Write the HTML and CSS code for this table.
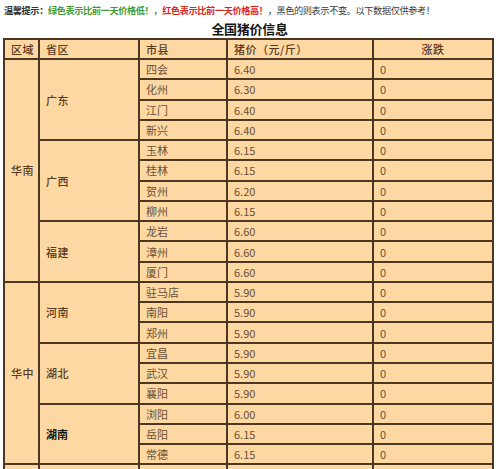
FILE: index.html
```html
<!DOCTYPE html>
<html lang="zh">
<head>
<meta charset="utf-8">
<title>全国猪价信息</title>
<link rel="stylesheet" href="styles.css">
</head>
<body>
<p class="note"><span class="lead">温馨提示：</span><span class="green">绿色表示比前一天价格低！</span>，<span class="red">红色表示比前一天价格高！</span>，黑色的则表示不变。以下数据仅供参考！</p>
<h1 class="title">全国猪价信息</h1>
<table class="prices">
<colgroup>
<col class="c-area"><col class="c-prov"><col class="c-city"><col class="c-price"><col class="c-chg">
</colgroup>
<thead>
<tr><th class="hd">区域</th><th class="hd">省区</th><th class="hd">市县</th><th class="hd">猪价（元/斤）</th><th class="hd center">涨跌</th></tr>
</thead>
<tbody>
<tr><td class="area" rowspan="11">华南</td><td class="prov" rowspan="4">广东</td><td>四会</td><td>6.40</td><td>0</td></tr>
<tr><td>化州</td><td>6.30</td><td>0</td></tr>
<tr><td>江门</td><td>6.40</td><td>0</td></tr>
<tr><td>新兴</td><td>6.40</td><td>0</td></tr>
<tr><td class="prov" rowspan="4">广西</td><td>玉林</td><td>6.15</td><td>0</td></tr>
<tr><td>桂林</td><td>6.15</td><td>0</td></tr>
<tr><td>贺州</td><td>6.20</td><td>0</td></tr>
<tr><td>柳州</td><td>6.15</td><td>0</td></tr>
<tr><td class="prov" rowspan="3">福建</td><td>龙岩</td><td>6.60</td><td>0</td></tr>
<tr><td>漳州</td><td>6.60</td><td>0</td></tr>
<tr><td>厦门</td><td>6.60</td><td>0</td></tr>
<tr><td class="area" rowspan="9">华中</td><td class="prov" rowspan="3">河南</td><td>驻马店</td><td>5.90</td><td>0</td></tr>
<tr><td>南阳</td><td>5.90</td><td>0</td></tr>
<tr><td>郑州</td><td>5.90</td><td>0</td></tr>
<tr><td class="prov" rowspan="3">湖北</td><td>宜昌</td><td>5.90</td><td>0</td></tr>
<tr><td>武汉</td><td>5.90</td><td>0</td></tr>
<tr><td>襄阳</td><td>5.90</td><td>0</td></tr>
<tr><td class="prov strong" rowspan="3">湖南</td><td>浏阳</td><td>6.00</td><td>0</td></tr>
<tr><td>岳阳</td><td>6.15</td><td>0</td></tr>
<tr><td>常德</td><td>6.15</td><td>0</td></tr>
<tr><td></td><td></td><td></td><td></td><td></td></tr>
</tbody>
</table>
</body>
</html>
```
FILE: styles.css
```css
html, body {
  margin: 0;
  padding: 0;
  background: #ffffff;
}
body {
  font-family: "Noto Sans CJK SC", "Noto Sans", sans-serif;
  overflow: hidden;
}
.note {
  margin: 0;
  padding: 2px 0 0 4px;
  height: 16px;
  font-size: 9.2px;
  line-height: 16px;
  letter-spacing: -0.4px;
  color: #3a3a3a;
  white-space: nowrap;
}
.lead {
  font-weight: 700;
  color: #333333;
}
.green {
  color: #3f9b35;
  font-weight: 700;
}
.red {
  color: #d9271f;
  font-weight: 700;
}
.title {
  margin: 2px 0 0 0;
  height: 18px;
  font-size: 13px;
  line-height: 18px;
  font-weight: 700;
  text-align: center;
  letter-spacing: -0.3px;
  color: #141414;
}
.prices {
  margin: 0 0 0 3px;
  width: 491px;
  table-layout: fixed;
  border-collapse: collapse;
  background: #fdd8a3;
  font-size: 11px;
}
.c-area { width: 35px; }
.c-prov { width: 100px; }
.c-city { width: 88px; }
.c-price { width: 146px; }
.c-chg { width: 120px; }
.prices th,
.prices td {
  border: 2px solid #4d3720;
  padding: 0 0 0 6px;
  height: 18.27px;
  line-height: 14px;
  text-align: left;
  vertical-align: middle;
  color: #6a5036;
  font-weight: 400;
  white-space: nowrap;
}
.prices th.hd {
  height: 18px;
  color: #5a3a1c;
  font-weight: 500;
  letter-spacing: 0.5px;
}
.prices th.center {
  text-align: center;
  padding: 0;
}
.prices td.area,
.prices td.prov {
  color: #5a3a1c;
  font-weight: 500;
  letter-spacing: 0.5px;
}
.prices td.strong {
  color: #141414;
  font-weight: 700;
  letter-spacing: 0;
}
```
